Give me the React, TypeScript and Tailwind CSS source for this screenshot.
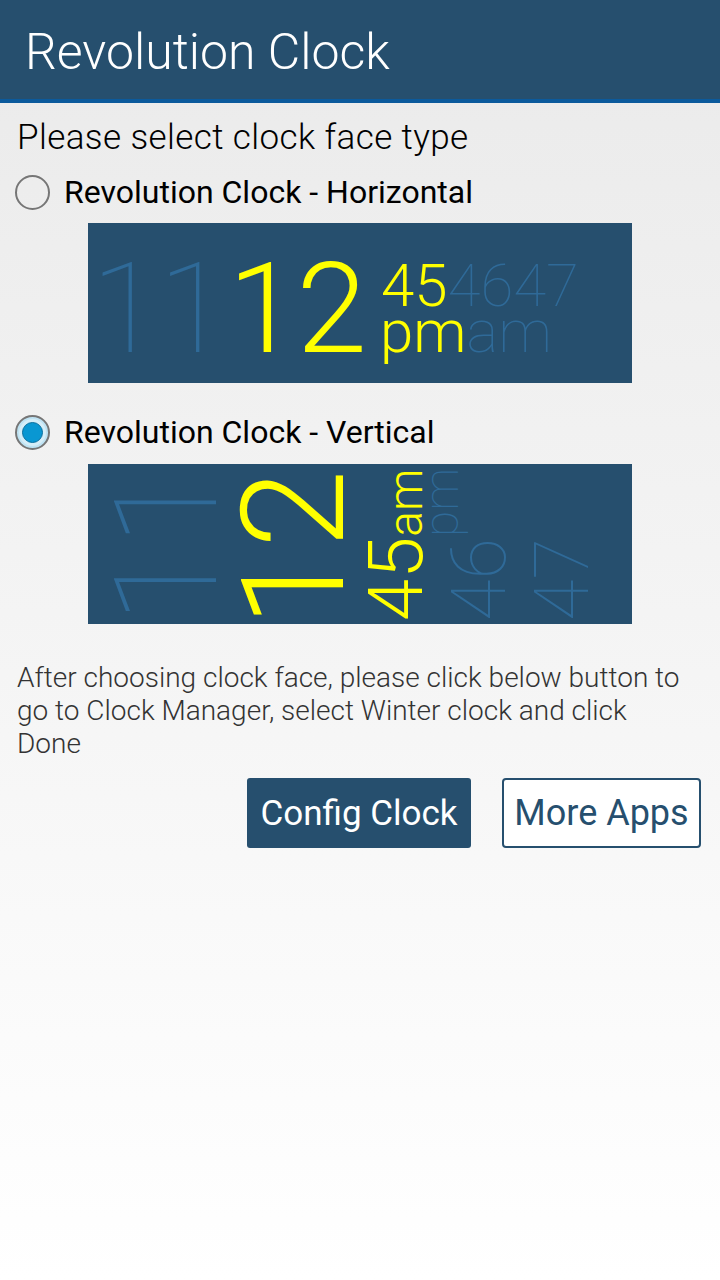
import React from "react";

const DIM = "#2f6a98";
const YEL = "#ffff00";
const BG = "#264f6e";
const FONT = "Roboto, 'Noto Sans', sans-serif";

function HorizontalFace() {
  return (
    <svg width="544" height="160" viewBox="0 0 544 160" className="block" style={{ fontFamily: FONT }}>
      <rect x="0" y="0" width="544" height="160" fill={BG} />
      <text x="3" y="129" fontSize="127" fontWeight="100" fill={DIM} letterSpacing="-2">11</text>
      <text x="140" y="129" fontSize="127" fontWeight="300" fill={YEL} letterSpacing="-2">12</text>
      <text x="293" y="83" fontSize="60">
        <tspan fill={YEL} fontWeight="300">45</tspan>
        <tspan fill={DIM} fontWeight="100">4647</tspan>
      </text>
      <text x="292" y="129" fontSize="60">
        <tspan fill={YEL} fontWeight="300">pm</tspan>
        <tspan fill={DIM} fontWeight="100">am</tspan>
      </text>
    </svg>
  );
}

function VerticalFace() {
  return (
    <svg width="544" height="160" viewBox="0 0 544 160" className="block" style={{ fontFamily: FONT }}>
      <rect x="0" y="0" width="544" height="160" fill={BG} />
      <text transform="translate(128,160) rotate(-90)" fontSize="142" fontWeight="100" fill={DIM}>11</text>
      <text transform="translate(255,163) rotate(-90)" fontSize="142" fontWeight="300" fill={YEL}>12</text>
      <text transform="translate(334,157) rotate(-90)" fill={YEL} fontWeight="300">
        <tspan fontSize="76">45</tspan>
        <tspan fontSize="48">am</tspan>
      </text>
      <text transform="translate(370,73) rotate(-90)" fontSize="48" fontWeight="100" fill={DIM}>pm</text>
      <text transform="translate(417,157) rotate(-90)" fontSize="76" fontWeight="100" fill={DIM}>46</text>
      <text transform="translate(500,157) rotate(-90)" fontSize="76" fontWeight="100" fill={DIM}>47</text>
    </svg>
  );
}

function Radio({ checked }: { checked: boolean }) {
  if (!checked) {
    return <span className="block w-[35px] h-[35px] rounded-full border-2 border-[#767676] shrink-0" />;
  }
  return (
    <span className="flex items-center justify-center w-[35px] h-[35px] rounded-full border-2 border-[#767676] bg-[#bfe3f3] shrink-0">
      <span className="flex items-center justify-center w-[27px] h-[27px] rounded-full bg-[#d6eef8]">
        <span className="block w-[21px] h-[21px] rounded-full bg-[#0997d2] border border-[#0a6f9e]" />
      </span>
    </span>
  );
}

export default function App() {
  return (
    <div className="min-h-[1280px] bg-gradient-to-b from-[#eaeaea] to-white font-['Roboto',sans-serif]">
      <div className="h-[103px] bg-[#264f6e] border-b-4 border-[#0b5a9c] flex items-center px-[25px] pt-[4px]">
        <h1 className="text-white text-[50px] font-light leading-none">Revolution Clock</h1>
      </div>
      <div className="pt-[15px]">
        <p className="px-[17px] text-[35px] tracking-[0.4px] font-light leading-[40px] text-black">Please select clock face type</p>
        <div className="flex items-center gap-[14px] pl-[15px] h-[48px] mt-[10px]">
          <Radio checked={false} />
          <span className="text-[32px] leading-none text-black">Revolution Clock - Horizontal</span>
        </div>
        <div className="pl-[88px] mt-[7px]">
          <HorizontalFace />
        </div>
        <div className="flex items-center gap-[14px] pl-[15px] h-[48px] mt-[25px]">
          <Radio checked={true} />
          <span className="text-[32px] leading-none text-black">Revolution Clock - Vertical</span>
        </div>
        <div className="pl-[88px] mt-[8px]">
          <VerticalFace />
        </div>
        <p className="pl-[17px] pr-[28px] mt-[37px] text-[28px] leading-[33px] font-light text-[#333333]">
          After choosing clock face, please click below button to go to Clock Manager, select Winter clock and click Done
        </p>
        <div className="flex justify-end gap-[31px] pr-[19px] mt-[18px]">
          <button className="w-[224px] h-[70px] bg-[#264f6e] text-white text-[35px] leading-none rounded-[3px]">Config Clock</button>
          <button className="w-[199px] h-[70px] bg-white border-2 border-[#264f6e] text-[#264f6e] text-[36px] leading-none rounded-[4px]">More Apps</button>
        </div>
      </div>
    </div>
  );
}
